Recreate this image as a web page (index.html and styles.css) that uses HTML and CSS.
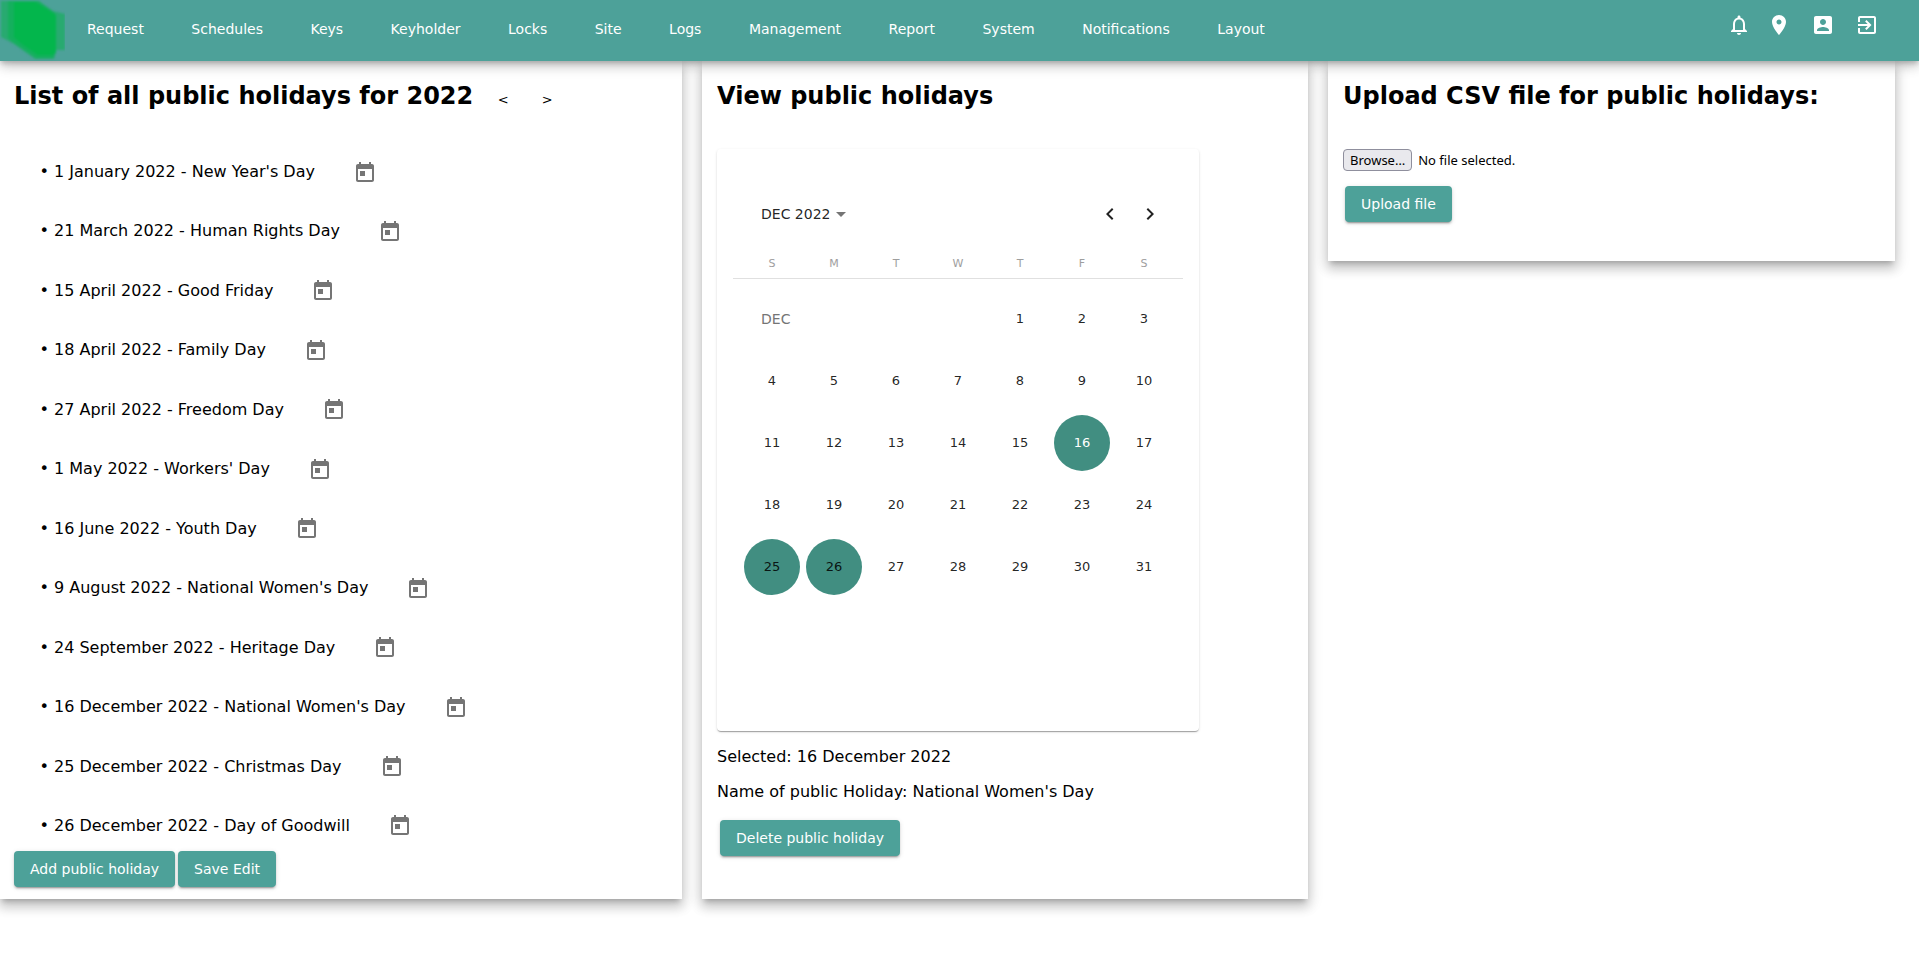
FILE: index.html
```html
<!DOCTYPE html>
<html lang="en">
<head>
<meta charset="utf-8">
<title>Public holidays</title>
<link rel="stylesheet" href="styles.css">
</head>
<body>
<svg width="0" height="0" class="sprite" aria-hidden="true">
  <symbol id="event" viewBox="0 0 24 24"><path d="M19 3h-1V1h-2v2H8V1H6v2H5c-1.11 0-1.99.9-1.99 2L3 19c0 1.1.89 2 2 2h14c1.1 0 2-.9 2-2V5c0-1.1-.9-2-2-2zm0 16H5V8h14v11zM7 10h5v5H7z"/></symbol>
</svg>
<header class="topbar">
  <a class="logo" href="#" aria-label="Home">
    <svg width="65" height="61" viewBox="0 0 65 61">
      <defs><filter id="soft" color-interpolation-filters="sRGB"><feGaussianBlur stdDeviation="0.9"/></filter></defs>
      <g filter="url(#soft)">
        <path fill="#28aa70" d="M1 1h38l14 10 12 3v36H55l-1 9H35L14 44 1 37z"/>
        <path fill="#14b05d" d="M8 1h30l17 12v41l-1 4H36L14 43l-6-5z"/>
        <path fill="#03b64c" d="M14 2h21l21 13v38l-4 2H38L22 44l-8-7z"/>
      </g>
    </svg>
  </a>
  <nav class="menu">
    <a href="#">Request</a><a href="#">Schedules</a><a href="#">Keys</a><a href="#">Keyholder</a><a href="#">Locks</a><a href="#">Site</a><a href="#">Logs</a><a href="#">Management</a><a href="#">Report</a><a href="#">System</a><a href="#">Notifications</a><a href="#">Layout</a>
  </nav>
  <div class="actions">
    <div class="alerts">
      <button type="button" aria-label="Notifications"><svg viewBox="0 0 24 24"><path d="M12 22c1.1 0 2-.9 2-2h-4c0 1.1.9 2 2 2zm6-6v-5c0-3.07-1.63-5.64-4.5-6.32V4c0-.83-.67-1.5-1.5-1.5s-1.5.67-1.5 1.5v.68C7.64 5.36 6 7.92 6 11v5l-2 2v1h16v-1l-2-2zm-2 1H8v-6c0-2.48 1.51-4.5 4-4.5s4 2.02 4 4.5v6z"/></svg></button>
      <button type="button" aria-label="Location"><svg viewBox="0 0 24 24"><path d="M12 2C8.13 2 5 5.13 5 9c0 5.25 7 13 7 13s7-7.75 7-13c0-3.87-3.13-7-7-7zm0 9.5c-1.38 0-2.5-1.12-2.5-2.5s1.12-2.5 2.5-2.5 2.5 1.12 2.5 2.5-1.12 2.5-2.5 2.5z"/></svg></button>
    </div>
    <button type="button" aria-label="Account"><svg viewBox="0 0 24 24"><path d="M3 5v14c0 1.1.89 2 2 2h14c1.1 0 2-.9 2-2V5c0-1.1-.9-2-2-2H5c-1.11 0-2 .9-2 2zm12 4c0 1.66-1.34 3-3 3s-3-1.34-3-3 1.34-3 3-3 3 1.34 3 3zm-9 8c0-2 4-3.1 6-3.1s6 1.1 6 3.1v1H6v-1z"/></svg></button>
    <button type="button" aria-label="Log out"><svg viewBox="0 0 24 24"><path d="M10.09 15.59L11.5 17l5-5-5-5-1.41 1.41L12.67 11H3v2h9.67l-2.58 2.59zM19 3H5c-1.11 0-2 .9-2 2v4h2V5h14v14H5v-4H3v4c0 1.1.89 2 2 2h14c1.1 0 2-.9 2-2V5c0-1.1-.9-2-2-2z"/></svg></button>
  </div>
</header>
<main class="columns">
  <section class="panel list-panel">
    <div class="heading">
      <h2>List of all public holidays for 2022</h2>
      <button type="button" class="year" aria-label="Previous year">&lt;</button>
      <button type="button" class="year" aria-label="Next year">&gt;</button>
    </div>
    <ul class="holidays">
      <li>1 January 2022 - New Year's Day<button type="button" class="pick" aria-label="Change date"><svg><use href="#event"/></svg></button></li>
      <li>21 March 2022 - Human Rights Day<button type="button" class="pick" aria-label="Change date"><svg><use href="#event"/></svg></button></li>
      <li>15 April 2022 - Good Friday<button type="button" class="pick" aria-label="Change date"><svg><use href="#event"/></svg></button></li>
      <li>18 April 2022 - Family Day<button type="button" class="pick" aria-label="Change date"><svg><use href="#event"/></svg></button></li>
      <li>27 April 2022 - Freedom Day<button type="button" class="pick" aria-label="Change date"><svg><use href="#event"/></svg></button></li>
      <li>1 May 2022 - Workers' Day<button type="button" class="pick" aria-label="Change date"><svg><use href="#event"/></svg></button></li>
      <li>16 June 2022 - Youth Day<button type="button" class="pick" aria-label="Change date"><svg><use href="#event"/></svg></button></li>
      <li>9 August 2022 - National Women's Day<button type="button" class="pick" aria-label="Change date"><svg><use href="#event"/></svg></button></li>
      <li>24 September 2022 - Heritage Day<button type="button" class="pick" aria-label="Change date"><svg><use href="#event"/></svg></button></li>
      <li>16 December 2022 - National Women's Day<button type="button" class="pick" aria-label="Change date"><svg><use href="#event"/></svg></button></li>
      <li>25 December 2022 - Christmas Day<button type="button" class="pick" aria-label="Change date"><svg><use href="#event"/></svg></button></li>
      <li>26 December 2022 - Day of Goodwill<button type="button" class="pick" aria-label="Change date"><svg><use href="#event"/></svg></button></li>
    </ul>
    <div class="buttons">
      <button type="button" class="btn">Add public holiday</button>
      <button type="button" class="btn">Save Edit</button>
    </div>
  </section>
  <section class="panel">
    <div class="heading"><h2>View public holidays</h2></div>
    <div class="calendar">
      <div class="cal-head">
        <button type="button" class="period">DEC 2022<span class="arrow"></span></button>
        <button type="button" class="step" aria-label="Previous month"><svg viewBox="0 0 24 24"><path d="M15.4 7.4 14 6l-6 6 6 6 1.4-1.4-4.6-4.6z"/></svg></button>
        <button type="button" class="step" aria-label="Next month"><svg viewBox="0 0 24 24"><path d="M8.6 7.4 10 6l6 6-6 6-1.4-1.4 4.6-4.6z"/></svg></button>
      </div>
      <table class="days">
        <thead><tr><th>S</th><th>M</th><th>T</th><th>W</th><th>T</th><th>F</th><th>S</th></tr></thead>
        <tbody>
          <tr><td colspan="4" class="month">DEC</td><td><button type="button">1</button></td><td><button type="button">2</button></td><td><button type="button">3</button></td></tr>
          <tr><td><button type="button">4</button></td><td><button type="button">5</button></td><td><button type="button">6</button></td><td><button type="button">7</button></td><td><button type="button">8</button></td><td><button type="button">9</button></td><td><button type="button">10</button></td></tr>
          <tr><td><button type="button">11</button></td><td><button type="button">12</button></td><td><button type="button">13</button></td><td><button type="button">14</button></td><td><button type="button">15</button></td><td><button type="button" class="holiday selected">16</button></td><td><button type="button">17</button></td></tr>
          <tr><td><button type="button">18</button></td><td><button type="button">19</button></td><td><button type="button">20</button></td><td><button type="button">21</button></td><td><button type="button">22</button></td><td><button type="button">23</button></td><td><button type="button">24</button></td></tr>
          <tr><td><button type="button" class="holiday">25</button></td><td><button type="button" class="holiday">26</button></td><td><button type="button">27</button></td><td><button type="button">28</button></td><td><button type="button">29</button></td><td><button type="button">30</button></td><td><button type="button">31</button></td></tr>
        </tbody>
      </table>
    </div>
    <p class="info">Selected: 16 December 2022</p>
    <p class="info">Name of public Holiday: National Women's Day</p>
    <button type="button" class="btn delete">Delete public holiday</button>
  </section>
  <section class="panel upload-panel">
    <div class="heading"><h2>Upload CSV file for public holidays:</h2></div>
    <label class="file"><input type="file" accept=".csv"><span class="browse">Browse…</span><span>No file selected.</span></label>
    <button type="button" class="btn upload">Upload file</button>
  </section>
</main>
</body>
</html>
```
FILE: styles.css
```css
* { box-sizing: border-box; }

body {
  min-height: 100vh;
  margin: 0;
  background: #fff;
  color: #000;
  font: 16px/20px "DejaVu Sans", sans-serif;
}

button {
  border: 0;
  padding: 0;
  background: none;
  color: inherit;
  font: inherit;
  cursor: pointer;
}

.sprite { display: block; height: 0; }

.topbar {
  position: relative;
  z-index: 1;
  display: flex;
  height: 61px;
  background: #4da199;
  color: #fff;
  box-shadow: 0 3px 5px -1px rgba(0, 0, 0, .2), 0 6px 10px rgba(0, 0, 0, .14), 0 1px 18px rgba(0, 0, 0, .12);
}

.logo { width: 65px; }
.logo svg { display: block; }

.menu {
  display: flex;
  flex: 0 1 1200px;
  justify-content: space-between;
  padding-left: 22px;
}

.menu a {
  color: inherit;
  font-size: 14px;
  line-height: 58px;
  text-decoration: none;
}

.actions {
  display: flex;
  gap: 20px;
  margin-left: auto;
  padding: 13px 40px 0 0;
}

.alerts { display: flex; gap: 16px; }

.actions button { width: 24px; height: 24px; }
.actions svg { display: block; width: 24px; height: 24px; fill: #fff; }

.columns {
  display: grid;
  grid-template-columns: 682fr 606fr 567fr;
  gap: 20px;
  padding: 0 24px 44px 0;
}

.panel {
  display: flex;
  flex-direction: column;
  align-items: flex-start;
  padding: 21px 15px 43px;
  background: #fff;
  box-shadow: 0 5px 5px -3px rgba(0, 0, 0, .2), 0 8px 10px 1px rgba(0, 0, 0, .14), 0 3px 14px 2px rgba(0, 0, 0, .12);
}

.list-panel { padding: 21px 14px 12px; }

.upload-panel { align-self: start; padding-bottom: 39px; }

.heading { display: flex; height: 67px; }

h2 {
  margin: 0 18px 0 0;
  font-size: 24px;
  line-height: 28px;
}

.year {
  width: 24px;
  height: 36px;
  margin-right: 20px;
  font-size: 13px;
}

.holidays {
  display: flex;
  flex: 1;
  flex-direction: column;
  justify-content: space-between;
  margin: 3px 0 5px;
  padding: 0 0 0 40px;
  line-height: 40px;
}

.holidays li::marker { content: "• "; }

.pick {
  width: 40px;
  height: 40px;
  padding-top: 1px;
  margin-left: 30px;
  vertical-align: top;
}

.pick svg { display: block; width: 24px; height: 24px; margin: auto; fill: #757575; }

.buttons { display: flex; gap: 3px; }

.btn {
  height: 36px;
  padding: 0 16px;
  border-radius: 4px;
  background: #4da199;
  color: #fff;
  font-size: 14px;
  box-shadow: 0 3px 1px -2px rgba(0, 0, 0, .2), 0 2px 2px rgba(0, 0, 0, .14), 0 1px 5px rgba(0, 0, 0, .12);
}

.calendar {
  min-height: 582px;
  margin-bottom: 16px;
  padding: 47px 16px 0;
  border-radius: 4px;
  box-shadow: 0 2px 1px -1px rgba(0, 0, 0, .2), 0 1px 1px rgba(0, 0, 0, .14), 0 1px 3px rgba(0, 0, 0, .12);
  color: rgba(0, 0, 0, .87);
}

.cal-head {
  display: flex;
  align-items: center;
  height: 36px;
  padding: 0 13px 0 28px;
}

.period {
  display: flex;
  align-items: center;
  margin-right: auto;
  font-size: 14px;
}

.arrow {
  margin-left: 6px;
  border: 5px solid transparent;
  border-top-color: #757575;
  border-bottom: 0;
}

.step { width: 40px; height: 40px; }
.step svg { display: block; width: 24px; height: 24px; margin: auto; fill: #222; }

.days {
  border-collapse: collapse;
  font-size: 13px;
  text-align: center;
}

.days th {
  height: 46px;
  padding: 18px 0 0;
  border-bottom: 1px solid #e0e0e0;
  color: #9e9e9e;
  font-size: 11px;
  font-weight: 400;
}

.days th:first-child, .days td:first-child { padding-left: 8px; }
.days th:last-child, .days td:last-child { padding-right: 8px; }

.days tbody::before { content: ""; display: table-row; height: 10px; }

.days td { height: 62px; padding: 0; }

.days td button {
  width: 56px;
  height: 56px;
  margin: 0 3px;
  border-radius: 50%;
  vertical-align: middle;
}

.days td.month {
  padding-left: 28px;
  color: #757575;
  font-size: 14px;
  text-align: left;
}

.days .holiday { background: #418e81; }
.days .selected { color: #fff; }

.info { margin: 0 0 15px; }

.delete { margin: 3px 0 0 3px; }

.file {
  display: flex;
  align-items: center;
  gap: 6px;
  font: 13px/16px "Noto Sans", sans-serif;
}

.file input {
  position: absolute;
  width: 1px;
  height: 1px;
  opacity: 0;
}

.browse {
  padding: 2px 6px;
  border: 1px solid #8f8f9d;
  border-radius: 4px;
  background: #e9e9ed;
}

.upload { margin: 15px 0 0 2px; }
```
